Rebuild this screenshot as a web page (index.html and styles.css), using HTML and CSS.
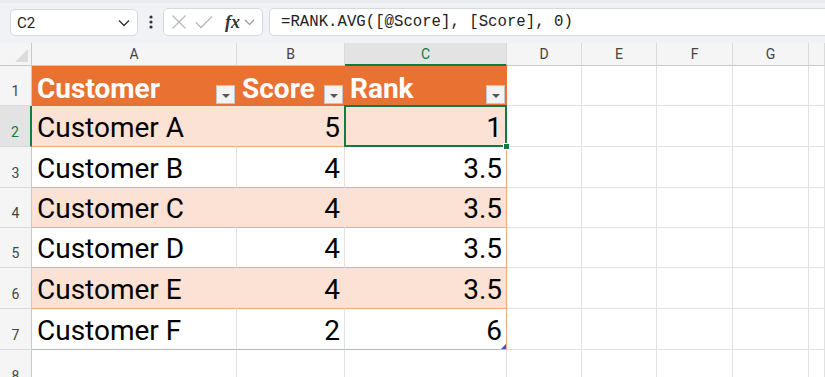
FILE: index.html
```html
<!DOCTYPE html>
<html lang="en">
<head>
    <meta charset="UTF-8" />
    <title>RANK.AVG</title>
    <link rel="stylesheet" href="styles.css">
</head>
<body>
    <div class="topbar">
        <div class="namebox">
            <span>C2</span>
            <svg width="12" height="8" viewBox="0 0 12 8"><path d="M1 1.5 L6 6.5 L11 1.5" fill="none" stroke="#333" stroke-width="1.4"/></svg>
        </div>
        <div class="kebab">
            <svg width="4" height="14" viewBox="0 0 4 14"><circle cx="2" cy="2" r="1.6" fill="#333"/><circle cx="2" cy="7" r="1.6" fill="#333"/><circle cx="2" cy="12" r="1.6" fill="#333"/></svg>
        </div>
        <div class="fxbox">
            <svg width="16" height="16" viewBox="0 0 16 16"><path d="M1.5 1.5 L14.5 14.5 M14.5 1.5 L1.5 14.5" stroke="#b8b8b8" stroke-width="1.3"/></svg>
            <svg width="18" height="14" viewBox="0 0 18 14"><path d="M1 7.5 L6 12.5 L17 1.5" fill="none" stroke="#b8b8b8" stroke-width="1.3"/></svg>
            <span class="fx">fx</span>
            <svg width="11" height="7" viewBox="0 0 11 7"><path d="M1 1 L5.5 5.5 L10 1" fill="none" stroke="#999" stroke-width="1.2"/></svg>
        </div>
        <div class="formula">=RANK.AVG([@Score], [Score], 0)</div>
    </div>

    <div class="sheet">
        <div class="corner"></div>
        <div class="colhead">A</div>
        <div class="colhead">B</div>
        <div class="colhead active">C</div>
        <div class="colhead">D</div>
        <div class="colhead">E</div>
        <div class="colhead">F</div>
        <div class="colhead">G</div>
        <div class="colhead"></div>

        <div class="rowhead">1</div>
        <div class="cell th"><span>Customer</span><i class="filter"></i></div>
        <div class="cell th"><span>Score</span><i class="filter"></i></div>
        <div class="cell th"><span>Rank</span><i class="filter"></i></div>
        <div class="cell"></div><div class="cell"></div><div class="cell"></div><div class="cell"></div><div class="cell"></div>

        <div class="rowhead active">2</div>
        <div class="cell band">Customer A</div>
        <div class="cell band num">5</div>
        <div class="cell band num last sel">1</div>
        <div class="cell"></div><div class="cell"></div><div class="cell"></div><div class="cell"></div><div class="cell"></div>

        <div class="rowhead">3</div>
        <div class="cell plain">Customer B</div>
        <div class="cell plain num">4</div>
        <div class="cell plain num last">3.5</div>
        <div class="cell"></div><div class="cell"></div><div class="cell"></div><div class="cell"></div><div class="cell"></div>

        <div class="rowhead">4</div>
        <div class="cell band">Customer C</div>
        <div class="cell band num">4</div>
        <div class="cell band num last">3.5</div>
        <div class="cell"></div><div class="cell"></div><div class="cell"></div><div class="cell"></div><div class="cell"></div>

        <div class="rowhead">5</div>
        <div class="cell plain">Customer D</div>
        <div class="cell plain num">4</div>
        <div class="cell plain num last">3.5</div>
        <div class="cell"></div><div class="cell"></div><div class="cell"></div><div class="cell"></div><div class="cell"></div>

        <div class="rowhead">6</div>
        <div class="cell band">Customer E</div>
        <div class="cell band num">4</div>
        <div class="cell band num last">3.5</div>
        <div class="cell"></div><div class="cell"></div><div class="cell"></div><div class="cell"></div><div class="cell"></div>

        <div class="rowhead">7</div>
        <div class="cell plain">Customer F</div>
        <div class="cell plain num">2</div>
        <div class="cell plain num last table-end">6</div>
        <div class="cell"></div><div class="cell"></div><div class="cell"></div><div class="cell"></div><div class="cell"></div>

        <div class="rowhead">8</div>
        <div class="cell"></div><div class="cell"></div><div class="cell"></div><div class="cell"></div>
        <div class="cell"></div><div class="cell"></div><div class="cell"></div><div class="cell"></div>
    </div>
</body>
</html>
```

FILE: styles.css
```css
body {
    margin: 0;
    width: 825px;
    height: 377px;
    overflow: hidden;
    background: #fff;
    font-family: Roboto, 'Liberation Sans', sans-serif;
}

/* formula bar */
.topbar {
    height: 43px;
    box-sizing: border-box;
    display: flex;
    align-items: flex-start;
    padding: 5px 0 0 10px;
    background: #f0f2f5;
    border-top: 3px solid #e8eaee;
    overflow: hidden;
}

.namebox {
    width: 128px;
    height: 27px;
    margin-top: 1px;
    box-sizing: border-box;
    background: #fff;
    border: 1px solid #d7d9dd;
    border-radius: 5px;
    display: flex;
    align-items: center;
    justify-content: space-between;
    padding: 0 7px 0 6px;
    font-size: 15px;
    color: #222;
}

.kebab {
    width: 25px;
    height: 28px;
    display: flex;
    align-items: center;
    justify-content: center;
}

.fxbox {
    width: 100px;
    height: 28px;
    box-sizing: border-box;
    background: #fff;
    border: 1px solid #d7d9dd;
    border-radius: 5px;
    display: flex;
    align-items: center;
    padding: 0 4px 0 7px;
    gap: 8px;
}

.fxbox .fx {
    font-family: 'Liberation Serif', serif;
    font-style: italic;
    font-weight: bold;
    font-size: 18px;
    color: #333;
    margin-left: 4px;
    margin-right: -4px;
}

.formula {
    flex: 1;
    margin-left: 6px;
    margin-right: -20px;
    height: 28px;
    box-sizing: border-box;
    background: #fff;
    border: 1px solid #d7d9dd;
    border-radius: 5px;
    padding-left: 11px;
    display: flex;
    align-items: center;
    font-family: 'Liberation Mono', monospace;
    font-size: 15.7px;
    color: #222;
}

/* grid */
.sheet {
    display: grid;
    grid-template-columns: 32px 205px 108px 162px 75px 75px 76px 76px 1fr;
    grid-template-rows: 23px 40px 41px 41px 40px 40px 41px 41px 41px;
}

.sheet > div {
    box-sizing: border-box;
}

.corner {
    background: #f5f5f5;
    border-right: 1px solid #c9c9c9;
    border-bottom: 1px solid #c9c9c9;
    position: relative;
}

.corner::after {
    content: '';
    position: absolute;
    right: 3px;
    bottom: 3px;
    border-left: 13px solid transparent;
    border-bottom: 13px solid #dcdcdc;
}

.colhead {
    background: #f5f5f5;
    border-right: 1px solid #dadada;
    border-bottom: 1px solid #c9c9c9;
    display: flex;
    align-items: center;
    justify-content: center;
    font-size: 14px;
    color: #444;
}

.colhead.active {
    background: #e3e3e3;
    border-bottom: 2px solid #107c41;
    color: #107c41;
}

.rowhead {
    background: #f5f5f5;
    border-right: 1px solid #c9c9c9;
    border-bottom: 1px solid #dadada;
    display: flex;
    align-items: flex-end;
    justify-content: center;
    padding-bottom: 6px;
    font-size: 14px;
    color: #444;
}

.rowhead.active {
    background: #e3e3e3;
    border-right: 2px solid #107c41;
    color: #107c41;
}

.cell {
    background: #fff;
    border-right: 1px solid #e1e1e1;
    border-bottom: 1px solid #e1e1e1;
    display: flex;
    align-items: flex-end;
    padding: 0 4px 4px 5px;
    font-size: 28px;
    line-height: 1;
    color: #000;
    position: relative;
    white-space: nowrap;
}

.cell.num {
    justify-content: flex-end;
}

.cell.th {
    background: #e97132;
    border-color: #e97132;
    color: #fff;
    font-weight: bold;
    justify-content: space-between;
    padding: 0 1px 1px 5px;
}

.cell.th span {
    margin-bottom: 1px;
}

.filter {
    width: 19px;
    height: 19px;
    box-sizing: border-box;
    background: #f3f3f3;
    border: 1px solid #c5c5c5;
    position: relative;
    flex-shrink: 0;
}

.filter::after {
    content: '';
    position: absolute;
    left: 5px;
    top: 8px;
    border-left: 4px solid transparent;
    border-right: 4px solid transparent;
    border-top: 4px solid #555;
}

.cell.band {
    background: #fbe2d5;
    border-right-color: #fbe2d5;
    border-bottom-color: #f1a983;
}

.cell.plain {
    border-bottom-color: #f1a983;
}

.cell.last {
    border-right-color: #f1a983;
}

.cell.sel::after {
    content: '';
    position: absolute;
    left: -1px;
    top: -1px;
    right: -1px;
    bottom: -1px;
    border: 2px solid #107c41;
}

.cell.sel::before {
    content: '';
    position: absolute;
    right: -4px;
    bottom: -4px;
    width: 5px;
    height: 5px;
    background: #107c41;
    border: 1px solid #fff;
    z-index: 2;
}

.cell.table-end::after {
    content: '';
    position: absolute;
    right: 0;
    bottom: 0;
    border-left: 5px solid transparent;
    border-bottom: 5px solid #3d55b8;
}
```
